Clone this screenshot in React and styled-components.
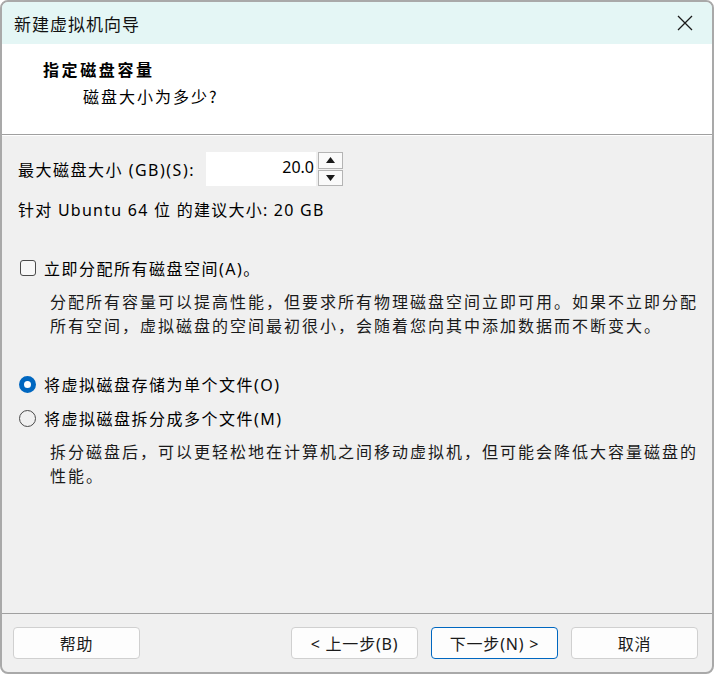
import React from "react";
import styled, { createGlobalStyle } from "styled-components";

const GlobalStyle = createGlobalStyle`
    html, body {
        margin: 0;
        padding: 0;
        background: #ffffff;
    }
    body {
        font-family: "Noto Sans", "Noto Sans CJK SC", sans-serif;
        color: #000;
    }
`;

export default function App() {
    return (
        <>
            <GlobalStyle />
            <Window>
                <TitleBar>
                    <Title>新建虚拟机向导</Title>
                    <CloseButton>
                        <svg width="16" height="16" viewBox="0 0 16 16">
                            <path d="M1 1 L15 15 M15 1 L1 15" stroke="#1a1a1a" strokeWidth="1.3" fill="none" />
                        </svg>
                    </CloseButton>
                </TitleBar>
                <Header>
                    <HeaderTitle>指定磁盘容量</HeaderTitle>
                    <HeaderSub>磁盘大小为多少?</HeaderSub>
                </Header>
                <Body>
                    <SizeRow>
                        <Label>最大磁盘大小 (GB)(S):</Label>
                        <Input>20.0</Input>
                        <Spin>
                            <SpinButton>
                                <svg width="9" height="6" viewBox="0 0 9 6"><path d="M0 6 L4.5 0 L9 6 Z" fill="#1a1a1a" /></svg>
                            </SpinButton>
                            <SpinButton>
                                <svg width="9" height="6" viewBox="0 0 9 6"><path d="M0 0 L4.5 6 L9 0 Z" fill="#1a1a1a" /></svg>
                            </SpinButton>
                        </Spin>
                    </SizeRow>
                    <Recommend>针对 Ubuntu 64 位 的建议大小: 20 GB</Recommend>

                    <OptionRow $top={37}>
                        <CheckBox />
                        <OptionText>立即分配所有磁盘空间(A)。</OptionText>
                    </OptionRow>
                    <Para>
                        分配所有容量可以提高性能，但要求所有物理磁盘空间立即可用。如果不立即分配所有空间，虚拟磁盘的空间最初很小，会随着您向其中添加数据而不断变大。
                    </Para>

                    <OptionRow $top={36}>
                        <Radio $checked />
                        <OptionText>将虚拟磁盘存储为单个文件(O)</OptionText>
                    </OptionRow>
                    <OptionRow $top={12}>
                        <Radio />
                        <OptionText>将虚拟磁盘拆分成多个文件(M)</OptionText>
                    </OptionRow>
                    <Para>
                        拆分磁盘后，可以更轻松地在计算机之间移动虚拟机，但可能会降低大容量磁盘的性能。
                    </Para>
                </Body>
                <Footer>
                    <Button>帮助</Button>
                    <Spacer />
                    <Button>&lt; 上一步(B)</Button>
                    <Button $primary>下一步(N) &gt;</Button>
                    <Button>取消</Button>
                </Footer>
            </Window>
        </>
    );
}

const Window = styled.div`
    width: 714px;
    height: 674px;
    box-sizing: border-box;
    border: 2px solid #a9a9a9;
    border-radius: 8px;
    overflow: hidden;
    display: flex;
    flex-direction: column;
    background: #f0f0f0;
`;
const TitleBar = styled.div`
    height: 42px;
    flex-shrink: 0;
    background: #e4f6f5;
    display: flex;
    align-items: center;
    justify-content: space-between;
    padding-left: 12px;
`;
const Title = styled.div`
    font-family: "Noto Sans CJK SC", sans-serif;
    font-size: 17px;
    letter-spacing: 1px;
    color: #111;
`;
const CloseButton = styled.div`
    width: 46px;
    height: 42px;
    margin-right: 4px;
    display: flex;
    align-items: center;
    justify-content: center;
`;
const Header = styled.div`
    height: 91px;
    flex-shrink: 0;
    background: #ffffff;
    border-bottom: 1px solid #a0a0a0;
    box-sizing: border-box;
    padding: 12px 0 0 41px;
`;
const HeaderTitle = styled.div`
    font-family: "Noto Sans CJK SC", sans-serif;
    font-weight: 700;
    font-size: 16px;
    letter-spacing: 2.6px;
    line-height: 26px;
`;
const HeaderSub = styled.div`
    font-family: "Noto Sans CJK SC", sans-serif;
    font-size: 16px;
    letter-spacing: 2px;
    line-height: 26px;
    margin-left: 40px;
    margin-top: 1px;
`;
const Body = styled.div`
    flex: 1;
    border-top: 1px solid #ffffff;
    padding: 16px 0 0 16px;
`;
const SizeRow = styled.div`
    display: flex;
    align-items: center;
    height: 34px;
`;
const Label = styled.div`
    font-size: 16px;
    letter-spacing: 1.5px;
    width: 188px;
    flex-shrink: 0;
    white-space: nowrap;
`;
const Input = styled.div`
    width: 110px;
    height: 34px;
    box-sizing: border-box;
    background: #ffffff;
    font-size: 16px;
    text-align: right;
    padding: 4px 2px 0 0;
`;
const Spin = styled.div`
    margin-left: 2px;
    width: 25px;
    height: 34px;
    display: flex;
    flex-direction: column;
    gap: 1px;
`;
const SpinButton = styled.div`
    flex: 1;
    border: 1px solid #b4b4b4;
    background: #fafafa;
    display: flex;
    align-items: center;
    justify-content: center;
`;
const Recommend = styled.div`
    font-size: 16px;
    letter-spacing: 1.25px;
    margin-top: 14px;
    line-height: 20px;
`;
const OptionRow = styled.div`
    display: flex;
    align-items: center;
    gap: 8px;
    margin-top: ${(p) => p.$top}px;
    height: 22px;
`;
const CheckBox = styled.div`
    width: 16px;
    height: 16px;
    box-sizing: border-box;
    border: 1px solid #4a4a4a;
    border-radius: 3px;
    background: #f7f7f7;
    margin-left: 2px;
`;
const Radio = styled.div`
    width: 17px;
    height: 17px;
    box-sizing: border-box;
    border-radius: 50%;
    margin-left: 1px;
    border: ${(p) => (p.$checked ? "5px solid #0067c0" : "1px solid #4a4a4a")};
    background: ${(p) => (p.$checked ? "#ffffff" : "transparent")};
`;
const OptionText = styled.div`
    font-size: 16px;
    letter-spacing: 1.5px;
`;
const Para = styled.div`
    font-family: "Noto Sans CJK SC", sans-serif;
    font-size: 16px;
    letter-spacing: 2px;
    line-height: 24px;
    color: #1a1a1a;
    margin: 10px 0 0 32px;
    width: 652px;
`;
const Footer = styled.div`
    flex-shrink: 0;
    height: 59px;
    border-top: 1px solid #a0a0a0;
    display: flex;
    align-items: flex-start;
    gap: 13px;
    padding: 13px 14px 0 11px;
    box-sizing: border-box;
`;
const Spacer = styled.div`
    flex: 1;
`;
const Button = styled.div`
    width: 127px;
    height: 32px;
    box-sizing: border-box;
    background: #fdfdfd;
    border: 1px solid ${(p) => (p.$primary ? "#0067c0" : "#d0d0d0")};
    border-radius: 4px;
    display: flex;
    align-items: center;
    justify-content: center;
    font-size: 16px;
    letter-spacing: 0.8px;
    color: #1a1a1a;
`;
